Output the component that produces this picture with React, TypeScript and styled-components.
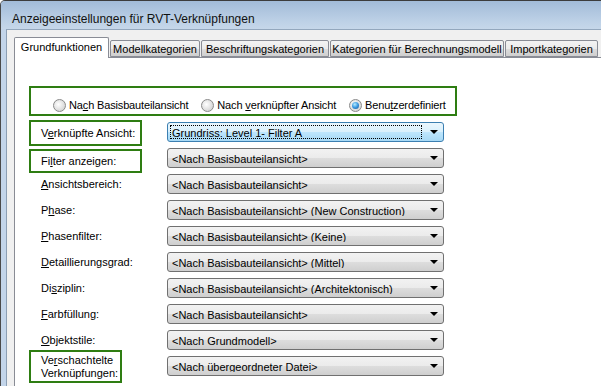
import { styled, createGlobalStyle } from 'styled-components';

const GlobalStyle = createGlobalStyle`
  html, body {
    margin: 0;
    padding: 0;
    background: #ffffff;
  }

  body {
    font-family: 'Liberation Sans', Arial, sans-serif;
    font-size: 11px;
    color: #000000;
  }
`;

const GREEN = '#2e7d12';

type Row = {
  label: React.ReactNode;
  value: string;
  mark?: { w: number; h: number; top: number };
  focused?: boolean;
};

function U({ children }: { children: React.ReactNode }) {
  return <St.Underline>{children}</St.Underline>;
}

const rows: Row[] = [
  {
    label: (
      <>
        V<U>e</U>rknüpfte Ansicht:
      </>
    ),
    value: 'Grundriss: Level 1- Filter A',
    mark: { w: 113, h: 26, top: -2 },
    focused: true,
  },
  {
    label: (
      <>
        Fi<U>l</U>ter anzeigen:
      </>
    ),
    value: '<Nach Basisbauteilansicht>',
    mark: { w: 113, h: 24, top: 1 },
  },
  {
    label: (
      <>
        <U>A</U>nsichtsbereich:
      </>
    ),
    value: '<Nach Basisbauteilansicht>',
  },
  {
    label: (
      <>
        P<U>h</U>ase:
      </>
    ),
    value: '<Nach Basisbauteilansicht> (New Construction)',
  },
  {
    label: (
      <>
        <U>P</U>hasenfilter:
      </>
    ),
    value: '<Nach Basisbauteilansicht> (Keine)',
  },
  {
    label: (
      <>
        <U>D</U>etaillierungsgrad:
      </>
    ),
    value: '<Nach Basisbauteilansicht> (Mittel)',
  },
  {
    label: (
      <>
        Di<U>s</U>ziplin:
      </>
    ),
    value: '<Nach Basisbauteilansicht> (Architektonisch)',
  },
  {
    label: (
      <>
        <U>F</U>arbfüllung:
      </>
    ),
    value: '<Nach Basisbauteilansicht>',
  },
  {
    label: (
      <>
        <U>O</U>bjektstile:
      </>
    ),
    value: '<Nach Grundmodell>',
  },
  {
    label: (
      <>
        Ve<U>r</U>schachtelte
        <br />
        Verknüpfungen:
      </>
    ),
    value: '<Nach übergeordneter Datei>',
    mark: { w: 93, h: 33, top: -6 },
  },
];

const tabs = [
  { name: 'Grundfunktionen', w: 95, active: true },
  { name: 'Modellkategorien', w: 90 },
  { name: 'Beschriftungskategorien', w: 128 },
  { name: 'Kategorien für Berechnungsmodell', w: 174 },
  { name: 'Importkategorien', w: 93 },
];

const App = () => {
  return (
    <>
      <GlobalStyle />
      <St.Window>
        <St.TitleBar>Anzeigeeinstellungen für RVT-Verknüpfungen</St.TitleBar>
        <St.Client>
          <St.TabRow>
            {tabs.map((t) => (
              <St.Tab key={t.name} $w={t.w} $active={!!t.active}>
                {t.name}
              </St.Tab>
            ))}
          </St.TabRow>

          <St.Panel>
            <St.RadioBox>
              <St.RadioOption>
                <St.Radio $checked={false} />
                <span>
                  Na<U>c</U>h Basisbauteilansicht
                </span>
              </St.RadioOption>
              <St.RadioOption>
                <St.Radio $checked={false} />
                <span>
                  Nach <U>v</U>erknüpfter Ansicht
                </span>
              </St.RadioOption>
              <St.RadioOption>
                <St.Radio $checked />
                <span>
                  Benu<U>t</U>zerdefiniert
                </span>
              </St.RadioOption>
            </St.RadioBox>

            <St.FormGrid>
              {rows.map((r, i) => (
                <St.FormRow key={i}>
                  {r.mark ? (
                    <St.MarkedLabel $w={r.mark.w} $h={r.mark.h} $top={r.mark.top}>
                      <span>{r.label}</span>
                    </St.MarkedLabel>
                  ) : (
                    <St.Label>{r.label}</St.Label>
                  )}
                  <St.Combo $focused={!!r.focused}>
                    <St.ComboText $focused={!!r.focused}>{r.value}</St.ComboText>
                    <St.Arrow />
                  </St.Combo>
                </St.FormRow>
              ))}
            </St.FormGrid>
          </St.Panel>
        </St.Client>
      </St.Window>
    </>
  );
};

export default App;

const St = {
  Window: styled.div`
    display: flex;
    flex-direction: column;
    width: 601px;
    height: 386px;
    overflow: hidden;
    box-sizing: border-box;

    border-top: 1px solid #3c3c3c;
    border-left: 1px solid #4a4a4a;
    border-top-left-radius: 5px;
    background: #c3d5ea;
  `,

  TitleBar: styled.div`
    height: 28px;
    flex: none;
    box-sizing: border-box;
    padding: 11px 0 0 11px;

    background: linear-gradient(#a2bbd8, #bcd0e6 70%, #c6d7ea);
    color: #111111;

    font-family: 'Liberation Sans', Arial, sans-serif;
    font-size: 12px;
    line-height: 15px;
    white-space: nowrap;
  `,

  Client: styled.div`
    display: flex;
    flex-direction: column;
    flex: 1;
    margin-left: 5px;
    padding: 7px 0 0 7px;

    border-top: 1px solid #93a7bd;
    border-left: 1px solid #8c9fb4;
    background: #f0f0f0;
  `,

  TabRow: styled.div`
    display: flex;
    align-items: flex-end;
    gap: 1px;
    height: 20px;
    flex: none;
  `,

  Tab: styled.div<{ $w: number; $active: boolean }>`
    display: flex;
    align-items: center;
    justify-content: center;
    position: relative;
    flex: none;
    width: ${({ $w }) => $w}px;
    height: ${({ $active }) => ($active ? 21 : 17)}px;
    margin-bottom: ${({ $active }) => ($active ? -1 : 0)}px;
    box-sizing: border-box;

    border: 1px solid #898c95;
    border-bottom: ${({ $active }) => ($active ? 'none' : '1px solid #898c95')};
    border-radius: 2px 2px 0 0;
    background: ${({ $active }) =>
      $active ? '#ffffff' : 'linear-gradient(#f3f3f3, #ebebeb 50%, #dddddd 51%, #cfcfcf)'};
    z-index: ${({ $active }) => ($active ? 2 : 0)};

    font-size: 11px;
    white-space: nowrap;
    padding-bottom: ${({ $active }) => ($active ? 2 : 0)}px;
  `,

  Panel: styled.div`
    flex: 1;
    box-sizing: border-box;
    padding: 28px 0 0 14px;

    border: 1px solid #898c95;
    border-right: none;
    border-bottom: none;
    background: #ffffff;
  `,

  RadioBox: styled.div`
    display: flex;
    align-items: center;
    gap: 13px;
    width: 428px;
    height: 30px;
    box-sizing: border-box;
    padding: 10px 0 2px 22px;

    border: 2px solid ${GREEN};
  `,

  RadioOption: styled.label`
    display: flex;
    align-items: center;
    gap: 3px;
    white-space: nowrap;
    line-height: 14px;
    letter-spacing: -0.15px;
  `,

  Radio: styled.span<{ $checked: boolean }>`
    position: relative;
    width: 13px;
    height: 13px;
    box-sizing: border-box;
    flex: none;

    border: 1px solid #8a8a8a;
    border-radius: 50%;
    background: radial-gradient(circle at 40% 40%, #ffffff, #e6e6e6 45%, #c8c8c8);

    &::after {
      content: '';
      display: ${({ $checked }) => ($checked ? 'block' : 'none')};
      position: absolute;
      left: 2px;
      top: 2px;
      width: 7px;
      height: 7px;
      border-radius: 50%;
      background: radial-gradient(circle at 40% 35%, #b6ecff, #3a98e0 50%, #1a4f8c);
    }
  `,

  FormGrid: styled.div`
    display: grid;
    grid-auto-rows: 20px;
    row-gap: 6px;
    margin-top: 6px;
  `,

  FormRow: styled.div`
    display: grid;
    grid-template-columns: 138px 277px;
    align-items: center;
  `,

  Label: styled.div`
    padding-left: 12px;
    line-height: 13px;
    white-space: nowrap;
  `,

  MarkedLabel: styled.div<{ $w: number; $h: number; $top: number }>`
    display: flex;
    align-items: center;
    align-self: start;
    width: ${({ $w }) => $w}px;
    height: ${({ $h }) => $h}px;
    margin-top: ${({ $top }) => $top}px;
    margin-bottom: ${({ $h, $top }) => 20 - $h - $top}px;
    box-sizing: border-box;
    padding-left: 10px;

    border: 2px solid ${GREEN};
    line-height: 13px;
    white-space: nowrap;
  `,

  Underline: styled.span`
    text-decoration: underline;
    text-underline-offset: 1px;
  `,

  Combo: styled.div<{ $focused: boolean }>`
    display: flex;
    align-items: center;
    height: 20px;
    box-sizing: border-box;
    padding: 2px 4px 2px 2px;

    border: 1px solid ${({ $focused }) => ($focused ? '#3c7fb1' : '#707070')};
    border-radius: 3px;
    background: ${({ $focused }) =>
      $focused
        ? 'linear-gradient(#eaf6fd, #d9f0fc 50%, #bee6fd 51%, #a7d9f5)'
        : 'linear-gradient(#f2f2f2, #ebebeb 50%, #dddddd 51%, #cfcfcf)'};
  `,

  ComboText: styled.div<{ $focused: boolean }>`
    flex: 1;
    height: 100%;
    box-sizing: border-box;
    padding-left: 1px;
    margin-right: ${({ $focused }) => ($focused ? 8 : 0)}px;

    border: 1px dotted ${({ $focused }) => ($focused ? '#000000' : 'transparent')};
    line-height: 14px;
    white-space: nowrap;
    overflow: hidden;
  `,

  Arrow: styled.span`
    flex: none;
    width: 0;
    height: 0;
    margin: 0 1px 0 0;

    border-left: 4px solid transparent;
    border-right: 4px solid transparent;
    border-top: 4px solid #000000;
  `,
};
